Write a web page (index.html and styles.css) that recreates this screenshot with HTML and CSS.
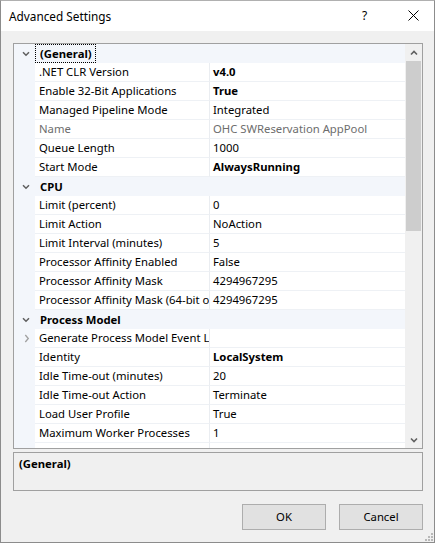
FILE: index.html
```html
<!DOCTYPE html>
<html>
<head>
<meta charset="utf-8">
<link rel="stylesheet" href="styles.css">
</head>
<body>
<div class="window">
  <div class="titlebar">
    <span class="title">Advanced Settings</span>
    <span class="help">?</span>
    <span class="close"><svg width="11" height="11" viewBox="0 0 11 11"><path d="M0.5 0.5 L10.5 10.5 M10.5 0.5 L0.5 10.5" stroke="#000" stroke-width="1" fill="none"/></svg></span>
  </div>
  <div class="body">
    <div class="grid">
      <div class="rows">
        <div class="row cat">
          <span class="gut"><svg class="chev" width="8" height="6" viewBox="0 0 8 6"><path d="M1 1.2 L4 4.2 L7 1.2" stroke="#5f5f5f" stroke-width="1.5" fill="none"/></svg></span>
          <span class="catlabel focus">(General)</span>
        </div>
        <div class="row"><span class="gut"></span><span class="name">.NET CLR Version</span><span class="val b">v4.0</span></div>
        <div class="row"><span class="gut"></span><span class="name">Enable 32-Bit Applications</span><span class="val b">True</span></div>
        <div class="row"><span class="gut"></span><span class="name">Managed Pipeline Mode</span><span class="val">Integrated</span></div>
        <div class="row dis"><span class="gut"></span><span class="name">Name</span><span class="val">OHC SWReservation AppPool</span></div>
        <div class="row"><span class="gut"></span><span class="name">Queue Length</span><span class="val">1000</span></div>
        <div class="row"><span class="gut"></span><span class="name">Start Mode</span><span class="val b">AlwaysRunning</span></div>
        <div class="row cat">
          <span class="gut"><svg class="chev" width="8" height="6" viewBox="0 0 8 6"><path d="M1 1.2 L4 4.2 L7 1.2" stroke="#5f5f5f" stroke-width="1.5" fill="none"/></svg></span>
          <span class="catlabel">CPU</span>
        </div>
        <div class="row"><span class="gut"></span><span class="name">Limit (percent)</span><span class="val">0</span></div>
        <div class="row"><span class="gut"></span><span class="name">Limit Action</span><span class="val">NoAction</span></div>
        <div class="row"><span class="gut"></span><span class="name">Limit Interval (minutes)</span><span class="val">5</span></div>
        <div class="row"><span class="gut"></span><span class="name">Processor Affinity Enabled</span><span class="val">False</span></div>
        <div class="row"><span class="gut"></span><span class="name">Processor Affinity Mask</span><span class="val">4294967295</span></div>
        <div class="row"><span class="gut"></span><span class="name">Processor Affinity Mask (64-bit option)</span><span class="val">4294967295</span></div>
        <div class="row cat">
          <span class="gut"><svg class="chev" width="8" height="6" viewBox="0 0 8 6"><path d="M1 1.2 L4 4.2 L7 1.2" stroke="#5f5f5f" stroke-width="1.5" fill="none"/></svg></span>
          <span class="catlabel">Process Model</span>
        </div>
        <div class="row"><span class="gut"><svg class="rchev" width="6" height="9" viewBox="0 0 6 9"><path d="M1.3 1 L4.3 4.5 L1.3 8" stroke="#a0a0a0" stroke-width="1.3" fill="none"/></svg></span><span class="name">Generate Process Model Event Log Entry</span><span class="val"></span></div>
        <div class="row"><span class="gut"></span><span class="name">Identity</span><span class="val b">LocalSystem</span></div>
        <div class="row"><span class="gut"></span><span class="name">Idle Time-out (minutes)</span><span class="val">20</span></div>
        <div class="row"><span class="gut"></span><span class="name">Idle Time-out Action</span><span class="val">Terminate</span></div>
        <div class="row"><span class="gut"></span><span class="name">Load User Profile</span><span class="val">True</span></div>
        <div class="row"><span class="gut"></span><span class="name">Maximum Worker Processes</span><span class="val">1</span></div>
        <div class="row"><span class="gut"></span><span class="name"></span><span class="val"></span></div>
      </div>
      <div class="scroll">
        <div class="sbtn"><svg width="8" height="6" viewBox="0 0 8 6"><path d="M1 4.5 L4 1.5 L7 4.5" stroke="#606060" stroke-width="1.6" fill="none"/></svg></div>
        <div class="track"><div class="thumb"></div></div>
        <div class="sbtn"><svg width="8" height="6" viewBox="0 0 8 6"><path d="M1 1.5 L4 4.5 L7 1.5" stroke="#606060" stroke-width="1.6" fill="none"/></svg></div>
      </div>
    </div>
    <div class="desc"><span class="desctitle">(General)</span></div>
    <div class="buttons">
      <button class="btn">OK</button>
      <button class="btn">Cancel</button>
    </div>
    <div class="grip"><svg width="8" height="8" viewBox="0 0 8 8" fill="#b8b8b8"><rect x="6" y="0" width="2" height="2"/><rect x="3" y="3" width="2" height="2"/><rect x="6" y="3" width="2" height="2"/><rect x="0" y="6" width="2" height="2"/><rect x="3" y="6" width="2" height="2"/><rect x="6" y="6" width="2" height="2"/></svg></div>
  </div>
</div>
</body>
</html>
```

FILE: styles.css
```css
* { box-sizing: border-box; }
html, body { margin: 0; padding: 0; background: #ffffff; }
body {
  font-family: "Noto Sans", "Open Sans", sans-serif;
  font-size: 11.3px;
  color: #000;
}
.window {
  width: 435px;
  height: 543px;
  border: 1px solid #8c8c8c;
  border-top-color: #b0b0b0;
  display: flex;
  flex-direction: column;
  background: #f0f0f0;
}
.titlebar {
  height: 30px;
  background: #fff;
  display: flex;
  align-items: center;
  padding-left: 8px;
  flex: none;
}
.title { font-size: 11.8px; flex: 1; padding-bottom: 1px; }
.help { font-size: 12px; width: 10px; margin-right: 36px; padding-bottom: 1px; }
.close { width: 11px; height: 11px; margin-right: 15px; display: flex; margin-bottom: 1px; }
.close svg { display: block; }
.body {
  flex: 1;
  padding: 12px 11px 0 12px;
  display: flex;
  flex-direction: column;
  position: relative;
}
.grid {
  height: 406px;
  border: 1px solid #a0a0a0;
  background: #fff;
  display: flex;
  overflow: hidden;
  flex: none;
}
.rows { width: 391px; flex: none; overflow: hidden; }
.row {
  display: flex;
  height: 19px;
  line-height: 18px;
  white-space: nowrap;
}
.gut {
  width: 21px;
  flex: none;
  background: #f3f6fb;
  display: flex;
  align-items: center;
  justify-content: center;
}
.chev { display: block; margin-left: 3px; }
.rchev { display: block; margin-left: 4px; }
.name {
  width: 174px;
  flex: none;
  padding-left: 4px;
  overflow: hidden;
  border-bottom: 1px solid #eef1f5;
}
.val {
  width: 196px;
  flex: none;
  padding-left: 3px;
  overflow: hidden;
  border-left: 1px solid #eaedf1;
  border-bottom: 1px solid #eef1f5;
}
.b { font-weight: bold; }
.dis .name, .dis .val { color: #6d6d6d; }
.cat { background: #f3f6fb; }
.catlabel {
  font-weight: bold;
  padding-left: 4px;
  line-height: 17px;
  height: 19px;
}
.focus {
  outline: 1px dotted #000;
  outline-offset: -1px;
  padding-left: 5px;
  padding-right: 4px;
  padding-top: 1px;
}
.cat .catlabel:not(.focus) { padding-left: 5px; padding-top: 1px; }
.scroll {
  width: 17px;
  flex: none;
  background: #f0f0f0;
  display: flex;
  flex-direction: column;
}
.sbtn {
  height: 17px;
  flex: none;
  display: flex;
  align-items: center;
  justify-content: center;
}
.sbtn svg { display: block; }
.track { flex: 1; }
.thumb {
  margin: 0 1px;
  height: 170px;
  background: #cdcdcd;
}
.desc {
  margin-top: 3px;
  height: 39px;
  border: 1px solid #a0a0a0;
  background: #f0f0f0;
  padding: 3px 0 0 5px;
  flex: none;
}
.desctitle { font-weight: bold; }
.buttons {
  margin-top: 13px;
  display: flex;
  justify-content: flex-end;
  gap: 13px;
}
.btn {
  width: 84px;
  height: 26px;
  border: 1px solid #adadad;
  background: #e1e1e1;
  font-family: "Noto Sans", "Open Sans", sans-serif;
  font-size: 11.3px;
  color: #000;
  padding: 0 0 1px 0;
}
.grip {
  position: absolute;
  right: 1px;
  bottom: 1px;
  width: 8px;
  height: 8px;
}
.grip svg { display: block; }
```
